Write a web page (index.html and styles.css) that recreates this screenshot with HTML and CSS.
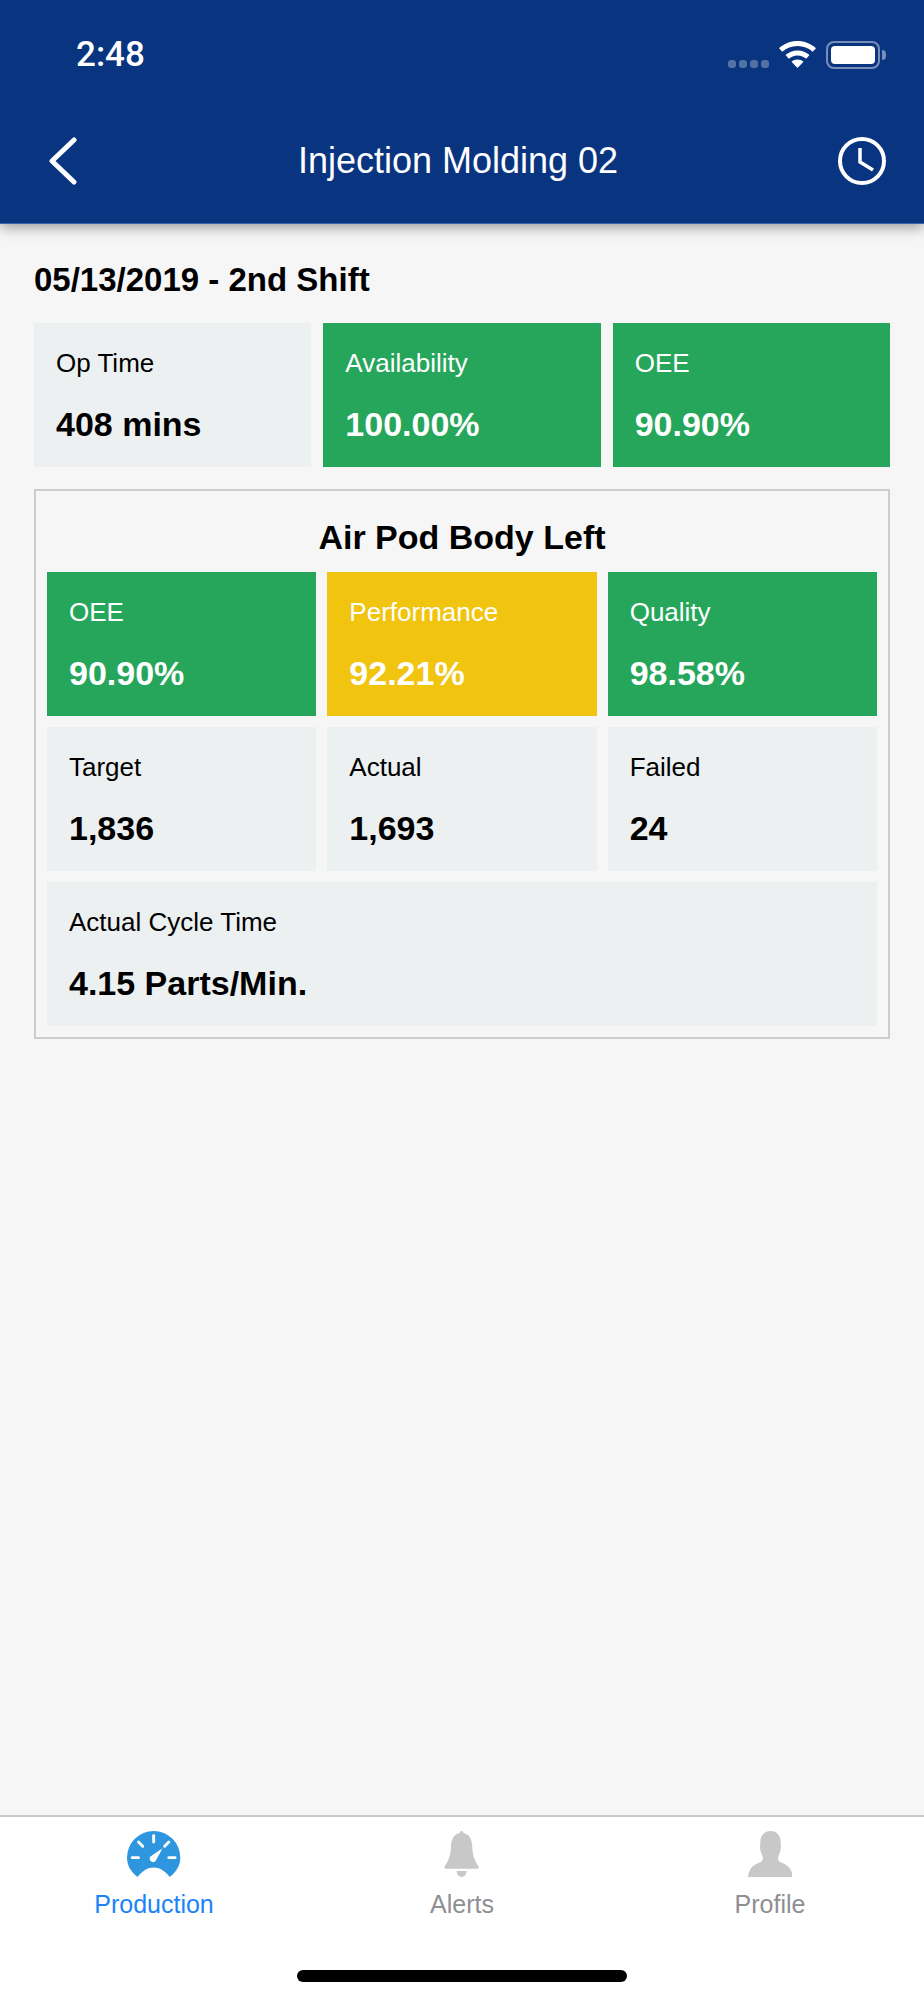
FILE: index.html
```html
<!DOCTYPE html>
<html lang="en">
<head>
    <meta charset="UTF-8">
    <meta name="viewport" content="width=device-width, initial-scale=1.0">
    <title>Injection Molding 02</title>
    <link rel="stylesheet" href="styles.css">
</head>
<body>
<div class="app">

    <!-- Header -->
    <header class="top-bar">
        <div class="status-bar">
            <span class="clock-time">2:48</span>
            <div class="status-icons">
                <div class="signal-dots"><i></i><i></i><i></i><i></i></div>
                <svg class="wifi" viewBox="0 0 37 27">
                    <path d="M18.5 0C11.4 0 5 2.7 0 7.2l3.3 3.6C7.4 7.2 12.7 5 18.5 5s11.1 2.2 15.2 5.8L37 7.2C32 2.7 25.6 0 18.500 0z" fill="#fff"/>
                    <path d="M18.500 9.500c-4.600 0-8.800 1.700-12 4.600l3.300 3.600c2.300-2 5.300-3.300 8.700-3.300s6.400 1.300 8.700 3.300l3.300-3.600c-3.200-2.900-7.400-4.600-12-4.600z" fill="#fff"/>
                    <path d="M18.500 18.500c-2.300 0-4.400 .9-6 2.300l6 6.200 6-6.200c-1.600-1.400-3.700-2.300-6-2.300z" fill="#fff"/>
                </svg>
                <div class="battery"><div class="battery-level"></div></div>
                <div class="battery-nub"></div>
            </div>
        </div>
        <div class="nav-bar">
            <svg class="back-icon" viewBox="0 0 30 48">
                <path d="M26 3L4 24l22 21" fill="none" stroke="#fff" stroke-width="5" stroke-linecap="round" stroke-linejoin="round"/>
            </svg>
            <h1>Injection Molding 02</h1>
            <svg class="history-icon" viewBox="0 0 48 48">
                <circle cx="24" cy="24" r="22" fill="none" stroke="#fff" stroke-width="4"/>
                <path d="M22 11v14l13 8" fill="none" stroke="#fff" stroke-width="3.500"/>
            </svg>
        </div>
    </header>

    <!-- Main content -->
    <main class="content">
        <h2 class="shift-title">05/13/2019 - 2nd Shift</h2>

        <div class="tile-row">
            <div class="tile">
                <p class="tile-label">Op Time</p>
                <p class="tile-value">408 mins</p>
            </div>
            <div class="tile green">
                <p class="tile-label">Availability</p>
                <p class="tile-value">100.00%</p>
            </div>
            <div class="tile green">
                <p class="tile-label">OEE</p>
                <p class="tile-value">90.90%</p>
            </div>
        </div>

        <section class="part-card">
            <h3>Air Pod Body Left</h3>
            <div class="part-grid">
                <div class="tile green">
                    <p class="tile-label">OEE</p>
                    <p class="tile-value">90.90%</p>
                </div>
                <div class="tile yellow">
                    <p class="tile-label">Performance</p>
                    <p class="tile-value">92.21%</p>
                </div>
                <div class="tile green">
                    <p class="tile-label">Quality</p>
                    <p class="tile-value">98.58%</p>
                </div>
                <div class="tile">
                    <p class="tile-label">Target</p>
                    <p class="tile-value">1,836</p>
                </div>
                <div class="tile">
                    <p class="tile-label">Actual</p>
                    <p class="tile-value">1,693</p>
                </div>
                <div class="tile">
                    <p class="tile-label">Failed</p>
                    <p class="tile-value">24</p>
                </div>
                <div class="tile wide">
                    <p class="tile-label">Actual Cycle Time</p>
                    <p class="tile-value">4.15 Parts/Min.</p>
                </div>
            </div>
        </section>
    </main>

    <!-- Tab bar -->
    <footer class="tab-bar">
        <nav class="tabs">
            <a class="tab active" href="#production">
                <svg class="tab-icon" viewBox="0 0 51 44">
                    <path d="M10 44C4 39 0 33 0 25.500a25.500 25.500 0 0 1 51 0C51 33 47 39 41 44 36 38 31 35 25.500 35S15 38 10 44z" fill="#2d96df"/>
                    <path d="M25.500 4.500v6M11 10.500l4 4M40 10.500l-4 4M5 25.500h6M40 25.500h6" stroke="#fff" stroke-width="2.800" stroke-linecap="round"/>
                    <path d="M22.500 24.500L34 16.500 27.500 28.500a3.200 3.200 0 1 1-5-4z" fill="#fff"/>
                </svg>
                <span>Production</span>
            </a>
            <a class="tab" href="#alerts">
                <svg class="tab-icon" viewBox="0 0 36 47">
                    <path d="M18 0c1 0 1.800 .8 2 2 6.500 1.500 8.500 7 8.800 13 .3 8 1.500 14 6.500 21 .8 1.200.4 2.500-1.300 2.500H2c-1.700 0-2.100-1.300-1.300-2.500 5-7 6.200-13 6.500-21 .3-6 2.300-11.500 8.800-13 .2-1.200 1-2 2-2z" fill="#c8c8c8"/>
                    <path d="M13 41h10c0 3.500-2.200 6-5 6s-5-2.500-5-6z" fill="#c8c8c8"/>
                </svg>
                <span>Alerts</span>
            </a>
            <a class="tab" href="#profile">
                <svg class="tab-icon" viewBox="0 0 44 45">
                    <path d="M22 0c6 0 10 4.500 10 11 0 2 .3 3.500.2 5.500-.3 3-1.200 5.500-2.200 7.500-.8 1.800-.8 4.500.5 5.500 3 2.300 12 3 13.500 15.500H0c1.500-12.500 10.500-13.200 13.500-15.500 1.300-1 1.300-3.700.5-5.500-1-2-1.900-4.500-2.200-7.500-.1-2 .2-3.500.2-5.500C12 4.500 16 0 22 0z" fill="#c8c8c8"/>
                </svg>
                <span>Profile</span>
            </a>
        </nav>
        <div class="home-indicator"></div>
    </footer>

</div>
</body>
</html>
```

FILE: styles.css
```css
/* General Reset */
* {
    margin: 0;
    padding: 0;
    box-sizing: border-box;
}

body {
    font-family: 'Liberation Sans', Arial, sans-serif;
    background-color: #f6f6f6;
    color: #000;
}

.app {
    display: flex;
    flex-direction: column;
    height: 2000px;
}

/* Header */
.top-bar {
    height: 224px;
    background-color: #09347f;
    border-bottom: 1px solid #3d62a8;
    box-shadow: 0 4px 12px rgba(0, 0, 0, 0.35);
    color: #fff;
    padding: 0 38px 0 48px;
}

.status-bar {
    display: flex;
    justify-content: space-between;
    height: 105px;
    padding-top: 36px;
}

.clock-time {
    margin-left: 28px;
    font-family: 'Roboto', sans-serif;
    font-size: 35px;
    font-weight: 500;
    line-height: 38px;
}

.status-icons {
    display: flex;
    align-items: flex-start;
    padding-top: 5px;
}

.signal-dots {
    display: flex;
    gap: 3px;
    margin-top: 19px;
    margin-right: 10px;
}

.signal-dots i {
    width: 8px;
    height: 8px;
    border-radius: 3px;
    background-color: rgba(255, 255, 255, 0.3);
}

.wifi {
    width: 37px;
    height: 27px;
    margin-right: 10px;
}

.battery {
    width: 54px;
    height: 28px;
    border: 2px solid rgba(255, 255, 255, 0.45);
    border-radius: 8px;
    padding: 3px;
}

.battery-level {
    height: 100%;
    background-color: #fff;
    border-radius: 4px;
}

.battery-nub {
    width: 4px;
    height: 10px;
    margin-top: 9px;
    margin-left: 2px;
    background-color: rgba(255, 255, 255, 0.45);
    border-radius: 0 4px 4px 0;
}

.nav-bar {
    display: flex;
    justify-content: space-between;
    align-items: center;
    height: 112px;
}

.nav-bar h1 {
    font-size: 36px;
    font-weight: 400;
}

.back-icon {
    width: 30px;
    height: 48px;
}

.history-icon {
    width: 48px;
    height: 48px;
}

/* Main */
.content {
    flex: 1;
    padding: 36px 34px 0;
}

.shift-title {
    font-size: 33px;
    line-height: 40px;
    margin-bottom: 23px;
}

.tile-row {
    display: grid;
    grid-template-columns: repeat(3, 1fr);
    gap: 12px;
    margin-bottom: 22px;
}

.tile {
    height: 144px;
    padding: 22px 22px 0;
    background-color: #ecf0f1;
}

.tile.green {
    background-color: #26a65b;
    color: #fff;
}

.tile.yellow {
    background-color: #f1c40f;
    color: #fff;
}

.tile.wide {
    grid-column: span 3;
}

.tile-label {
    font-size: 26px;
    line-height: 36px;
}

.tile-value {
    margin-top: 24px;
    font-size: 34px;
    font-weight: bold;
    line-height: 38px;
}

/* Part card */
.part-card {
    border: 2px solid #ccc;
    padding: 11px;
}

.part-card h3 {
    font-size: 34px;
    line-height: 40px;
    text-align: center;
    margin: 15px 0 15px;
}

.part-grid {
    display: grid;
    grid-template-columns: repeat(3, 1fr);
    gap: 11px;
}

/* Tab bar */
.tab-bar {
    height: 185px;
    background-color: #fff;
    border-top: 2px solid #c8c8c8;
}

.tabs {
    display: grid;
    grid-template-columns: repeat(3, 1fr);
    height: 153px;
}

.tab {
    display: flex;
    flex-direction: column;
    align-items: center;
    padding-top: 14px;
    text-decoration: none;
    color: #8e8e93;
    font-size: 25px;
}

.tab.active {
    color: #1a84f8;
}

.tab-icon {
    height: 46px;
    margin-bottom: 13px;
}

.home-indicator {
    width: 330px;
    height: 12px;
    margin: 0 auto;
    background-color: #000;
    border-radius: 6px;
}
```
